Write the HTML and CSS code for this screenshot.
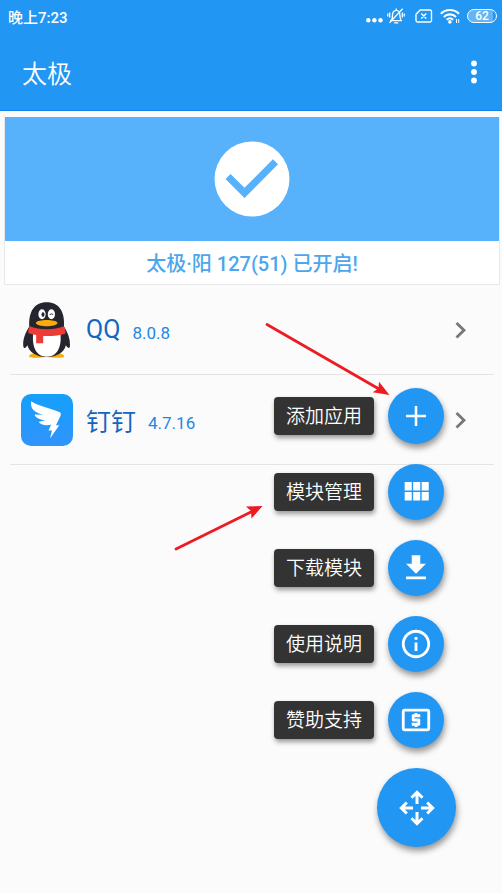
FILE: index.html
```html
<!DOCTYPE html>
<html lang="zh-CN">
<head>
<meta charset="utf-8">
<meta name="viewport" content="width=device-width, initial-scale=1">
<title>太极</title>
<link rel="stylesheet" href="styles.css">
</head>
<body>
<header class="top">
  <div class="status">
    <span class="clock">晚上7:23</span>
    <div class="status-icons">
      <svg width="17" height="16" viewBox="0 0 17 16" fill="#fff"><circle cx="2.3" cy="12.3" r="2.2"/><circle cx="8.4" cy="12.3" r="2.2"/><circle cx="14.5" cy="12.3" r="2.2"/></svg>
      <svg class="bell" width="18" height="16" viewBox="0 0 18 16" fill="none" stroke="#fff" stroke-width="1.3"><path d="M3 12.600h12M4.300 12c1.100-1 1.200-2.300 1.200-4.800C5.500 4.500 7 2.300 9.200 2.300s3.700 2.200 3.700 4.900c0 2.500.2 3.800 1.200 4.800M9.200 2.300V.5M7.200 14.900h4M15.600.8 2.500 14.900M2.700 4.500v5M.8 5.500v3M15.300 4.500v5M17.200 5.500v3"/></svg>
      <svg class="sim" width="18" height="16" viewBox="0 0 18 16" fill="none" stroke="#fff" stroke-width="1.4"><path d="M5.200 2H15a1.500 1.500 0 0 1 1.500 1.500v9A1.500 1.500 0 0 1 15 14H2.500A1.500 1.500 0 0 1 1 12.500V6.200zM6.300 5.500l5 5M11.300 5.500l-5 5"/></svg>
      <svg class="wifi" width="20" height="16" viewBox="0 0 20 16" fill="none" stroke="#fff" stroke-width="2.100"><path d="M.8 5.800c5-5 13.200-5 18.200 0M3.800 8.900c3.400-3.300 8.800-3.300 12.200 0M6.700 11.700c1.900-1.700 4.500-1.700 6.400 0"/><circle cx="9.900" cy="13.900" r="1.800" fill="#fff" stroke="none"/><path d="M16.500 11v4M18.700 11v4" stroke-width="1"/></svg>
      <span class="battery">62</span>
    </div>
  </div>
  <div class="appbar">
    <h1>太极</h1>
    <button class="more" type="button" aria-label="更多选项"><svg width="8" height="24" viewBox="0 0 8 24" fill="#fff"><circle cx="4" cy="3.500" r="2.900"/><circle cx="4" cy="12" r="2.900"/><circle cx="4" cy="20.500" r="2.900"/></svg></button>
  </div>
</header>
<main>
  <section class="card">
    <div class="banner">
      <svg width="76" height="76" viewBox="0 0 76 76"><circle cx="38" cy="38" r="37.500" fill="#fff"/><path d="M14 35.500 30.500 51.800 61.500 20.800" fill="none" stroke="#57b2fb" stroke-width="7.200"/></svg>
    </div>
    <p class="state">太极·阳 127(51) 已开启!</p>
  </section>
  <ul class="apps">
    <li><a href="#qq">
      <span class="app-icon"><svg width="48" height="56" viewBox="0 0 48 56">
        <path d="M22 51c-8-1-16 1-16 3.300C6 56 15 56.300 23.700 55c8.700 1.300 17.600 1 17.600-.7 0-2.300-8-4.300-17.300-3.300" fill="#faab07"/>
        <path d="M6.300 24.500C5.500 10 11 .3 23.700.3S41.900 10 41 24.500c3.700 6 6.200 12 6 18.500-.1 3.800-1.500 4-4.200.2C41.500 50 34 55 23.700 55S6 50 4.500 43.200C2 47 .3 47 .2 43 0 36.500 2.600 30.500 6.300 24.500z" fill="#25252f"/>
        <path d="M10.200 31h27.200c1.500 13.500-3 23.700-13.700 23.700S8.700 44.500 10.200 31z" fill="#fff"/>
        <path d="M6.600 24.200c10 4 24.300 4 34.300 0 1.200 2.500 1.600 4.600 1.600 7.300-5.500 2-12.300 2.700-22.300 2.500v7.300h-7V33c-3-.5-5.700-1.100-8-2 0-2.600.5-4.600 1.400-6.800z" fill="#ed3b35"/>
        <ellipse cx="19" cy="12.300" rx="3.600" ry="5" fill="#fff"/><ellipse cx="28.400" cy="12.300" rx="3.600" ry="5" fill="#fff"/>
        <ellipse cx="20" cy="12.600" rx="1.500" ry="2.300" fill="#25252f"/><path d="M26.800 13c.3-1.500 3-1.500 3.300 0" fill="none" stroke="#25252f"/>
        <path d="M12.700 20.900c2-3.800 20-3.800 22 0-2 4.300-20 4.300-22 0z" fill="#faab07"/>
      </svg></span>
      <span class="name">QQ</span><span class="version">8.0.8</span>
      <svg class="chevron" width="12" height="18" viewBox="0 0 12 18"><path d="M1.500 2 9 9.200 1.500 16.500" fill="none" stroke="#777" stroke-width="2.800"/></svg>
    </a></li>
    <li><a href="#dingtalk">
      <span class="app-icon"><svg width="52" height="52" viewBox="0 0 52 52">
        <defs><linearGradient id="sky" x1="0" y1="0" x2="0" y2="1"><stop offset="0" stop-color="#159ffb"/><stop offset="1" stop-color="#3094fb"/></linearGradient></defs>
        <rect width="52" height="52" rx="10" fill="url(#sky)"/>
        <path d="M10.200 7.300C17 12 30 14.500 38.300 18c1.700.8 1.900 2 1.200 3.700L35 31.300h3.300L29 44.500l2-8h-3.500l2.600-5.800c-5.500.9-9 .5-11.900-2-.4-1 .1-1.200 1-1.300l5-1.200c-4.800-.5-8.500-1.900-10.300-4.500-.3-1 .1-1.400 1-1.300l7 .4c-5.500-1.800-9.300-3.700-10.700-6.300-1.200-2.200-1.400-4.500-1-7.200z" fill="#fff"/>
      </svg></span>
      <span class="name">钉钉</span><span class="version">4.7.16</span>
      <svg class="chevron" width="12" height="18" viewBox="0 0 12 18"><path d="M1.500 2 9 9.200 1.500 16.500" fill="none" stroke="#777" stroke-width="2.800"/></svg>
    </a></li>
  </ul>
</main>
<nav class="dial" aria-label="快捷操作">
  <button class="action" type="button"><span class="label">添加应用</span><span class="fab"><svg width="34" height="34" viewBox="0 0 24 24" fill="#fff"><path d="M19 12.900h-6.100V19h-1.800v-6.100H5v-1.800h6.100V5h1.800v6.100H19z"/></svg></span></button>
  <button class="action" type="button"><span class="label">模块管理</span><span class="fab"><svg width="34" height="34" viewBox="0 0 24 24" fill="#fff"><path d="M4 11h5V5H4zm0 7h5v-6H4zm6 0h5v-6h-5zm6 0h5v-6h-5zm-6-7h5V5h-5zm6-6v6h5V5z"/></svg></span></button>
  <button class="action" type="button"><span class="label">下载模块</span><span class="fab"><svg width="34" height="34" viewBox="0 0 24 24" fill="#fff"><path d="M19 9h-4V3H9v6H5l7 7zM5 18v2h14v-2z"/></svg></span></button>
  <button class="action" type="button"><span class="label">使用说明</span><span class="fab"><svg width="34" height="34" viewBox="0 0 24 24" fill="#fff"><path d="M11 7h2v2h-2zm0 4h2v6h-2zm1-9C6.480 2 2 6.480 2 12s4.480 10 10 10 10-4.480 10-10S17.520 2 12 2zm0 18c-4.410 0-8-3.590-8-8s3.590-8 8-8 8 3.590 8 8-3.590 8-8 8z"/></svg></span></button>
  <button class="action" type="button"><span class="label">赞助支持</span><span class="fab"><svg width="34" height="34" viewBox="0 0 24 24" fill="#fff"><path d="M11 17h2v-1h1c.55 0 1-.45 1-1v-3c0-.55-.45-1-1-1h-3v-1h4V8h-2V7h-2v1h-1c-.55 0-1 .45-1 1v3c0 .55.45 1 1 1h3v1H9v2h2zm9-13H4c-1.110 0-2 .89-2 2v12c0 1.110.89 2 2 2h16c1.110 0 2-.89 2-2V6c0-1.110-.89-2-2-2zm0 14H4V6h16z"/></svg></span></button>
  <button class="fab main" type="button" aria-label="收起菜单"><svg width="36" height="36" viewBox="0 0 36 36" fill="none" stroke="#fff" stroke-width="3"><path d="M18 14V2.500M12.500 7.800 18 2.300l5.500 5.500M18 22v11.500M12.500 28.200 18 33.700l5.500-5.500M14 18H2.500M7.800 12.500 2.300 18l5.500 5.500M22 18h11.500M28.200 12.500l5.500 5.500-5.500 5.500"/></svg></button>
</nav>
<svg class="pointers" width="390" height="552" viewBox="0 0 390 552" fill="#ed1c24" stroke="#ed1c24" aria-hidden="true">
  <path d="M267 324.500 379 389M176 549l76-37.500" fill="none" stroke-width="2.800" stroke-linecap="round"/>
  <path d="M389.500 395 372.700 392.300 378.500 388.500 379 381.800z M262.500 506 246 506.500 251 511 251.500 518.500z" stroke="none"/>
</svg>
</body>
</html>
```
FILE: styles.css
```css
* {
  box-sizing: border-box;
}

body {
  margin: 0;
  min-height: 100vh;
  position: relative;
  background: #fbfbfb;
  font-family: Roboto, "Noto Sans CJK SC", sans-serif;
}

svg {
  display: block;
  flex: none;
}

button {
  border: 0;
  padding: 0;
  background: none;
  font: inherit;
  cursor: pointer;
}

.top {
  background: #2196f3;
  border-bottom: 1px solid #0d84ef;
  color: #fff;
}

.status {
  height: 32px;
  padding: 0 5px 0 8px;
  display: flex;
  align-items: center;
  justify-content: space-between;
}

.clock {
  font-size: 15px;
  font-weight: 500;
}

.status-icons {
  display: flex;
  align-items: center;
}

.bell {
  margin-left: 4px;
}

.sim {
  margin-left: 10px;
}

.wifi {
  margin-left: 7px;
}

.battery {
  width: 30px;
  height: 14px;
  margin-left: 7px;
  border: 1px solid #fff;
  border-radius: 7px;
  background: linear-gradient(90deg, #64b5f7 88%, transparent 88%);
  font-size: 12px;
  font-weight: 500;
  line-height: 12px;
  text-align: center;
}

.appbar {
  height: 78px;
  padding: 2px 22px 0;
  display: flex;
  align-items: center;
  justify-content: space-between;
}

h1 {
  margin: 0;
  font-size: 25px;
  font-weight: 350;
}

.more {
  width: 12px;
  display: flex;
  justify-content: center;
}

.card {
  margin: 6px 2px 0 4px;
  border: 1px solid #e8e8e8;
  border-top: 0;
  border-radius: 2px;
  background: #fff;
}

.banner {
  height: 124px;
  display: flex;
  align-items: center;
  justify-content: center;
  background: #57b2fb;
}

.state {
  margin: 0;
  padding-top: 3px;
  color: #4ba6ee;
  font-size: 20px;
  font-weight: 500;
  line-height: 40px;
  text-align: center;
}

.apps {
  margin: 0;
  padding: 0 8px 0 10px;
  list-style: none;
}

.apps li {
  border-bottom: 1px solid #e4e4e4;
}

.apps a {
  height: 89px;
  padding: 0 27px 0 11px;
  display: flex;
  align-items: center;
  text-decoration: none;
}

.app-icon {
  width: 52px;
  margin-right: 13px;
  display: flex;
  justify-content: center;
}

.name {
  margin-right: 12px;
  color: #1565c0;
  font-size: 25px;
  font-weight: 400;
}

.version {
  padding-top: 6px;
  color: #1e88e5;
  font-size: 17px;
}

.chevron {
  margin-left: auto;
}

.dial {
  position: absolute;
  right: 46px;
  bottom: 46px;
  display: flex;
  flex-direction: column;
  align-items: flex-end;
  gap: 20px;
}

.action {
  margin-right: 12px;
  display: flex;
  align-items: center;
  gap: 14px;
}

.label {
  padding: 2px 12px 0;
  border-radius: 4px;
  background: #333;
  box-shadow: 1px 3px 5px rgba(0, 0, 0, 0.4);
  color: #fff;
  font-size: 19px;
  font-weight: 350;
  line-height: 36px;
}

.fab {
  width: 56px;
  height: 56px;
  display: flex;
  align-items: center;
  justify-content: center;
  border-radius: 50%;
  background: #2196f3;
  box-shadow: 1px 4px 6px rgba(0, 0, 0, 0.42);
}

.main {
  width: 79px;
  height: 79px;
}

.pointers {
  position: absolute;
  left: 0;
  top: 0;
  pointer-events: none;
}
```
